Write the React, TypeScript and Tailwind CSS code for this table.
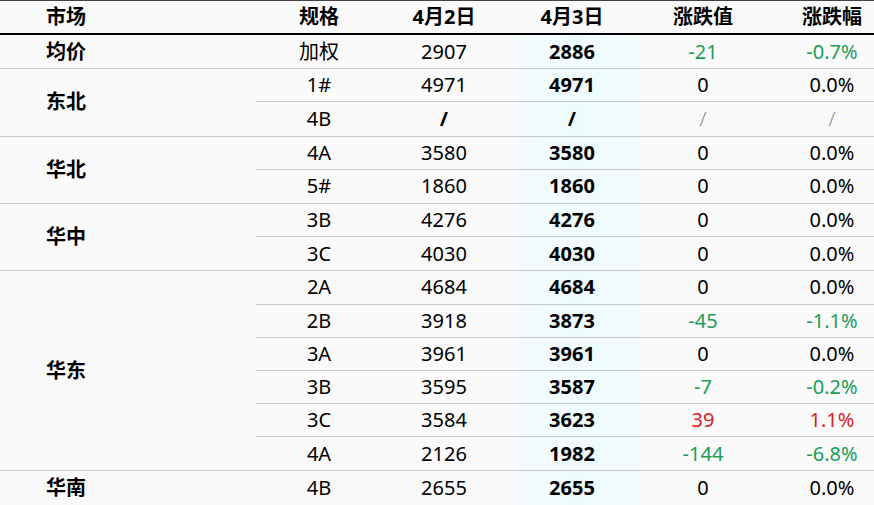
import React from 'react';

type Row = {
  spec: string;
  prev: string;
  cur: string;
  diff: string;
  pct: string;
  tone?: 'up' | 'down' | 'flat' | 'none';
};

type Group = { market: string; rows: Row[] };

const groups: Group[] = [
  { market: '均价', rows: [{ spec: '加权', prev: '2907', cur: '2886', diff: '-21', pct: '-0.7%', tone: 'down' }] },
  {
    market: '东北',
    rows: [
      { spec: '1#', prev: '4971', cur: '4971', diff: '0', pct: '0.0%' },
      { spec: '4B', prev: '/', cur: '/', diff: '/', pct: '/', tone: 'none' },
    ],
  },
  {
    market: '华北',
    rows: [
      { spec: '4A', prev: '3580', cur: '3580', diff: '0', pct: '0.0%' },
      { spec: '5#', prev: '1860', cur: '1860', diff: '0', pct: '0.0%' },
    ],
  },
  {
    market: '华中',
    rows: [
      { spec: '3B', prev: '4276', cur: '4276', diff: '0', pct: '0.0%' },
      { spec: '3C', prev: '4030', cur: '4030', diff: '0', pct: '0.0%' },
    ],
  },
  {
    market: '华东',
    rows: [
      { spec: '2A', prev: '4684', cur: '4684', diff: '0', pct: '0.0%' },
      { spec: '2B', prev: '3918', cur: '3873', diff: '-45', pct: '-1.1%', tone: 'down' },
      { spec: '3A', prev: '3961', cur: '3961', diff: '0', pct: '0.0%' },
      { spec: '3B', prev: '3595', cur: '3587', diff: '-7', pct: '-0.2%', tone: 'down' },
      { spec: '3C', prev: '3584', cur: '3623', diff: '39', pct: '1.1%', tone: 'up' },
      { spec: '4A', prev: '2126', cur: '1982', diff: '-144', pct: '-6.8%', tone: 'down' },
    ],
  },
  { market: '华南', rows: [{ spec: '4B', prev: '2655', cur: '2655', diff: '0', pct: '0.0%' }] },
];

const toneClass = (tone?: Row['tone']) => {
  if (tone === 'down') return 'text-[#1b9d57]';
  if (tone === 'up') return 'text-[#e0201c]';
  if (tone === 'none') return 'text-[#8a8a8a] font-light';
  return 'text-black';
};

const cols = 'grid grid-cols-[126px_124px_132px_130px_128px]';

export default function App() {
  return (
    <div
      className="w-[874px] h-[505px] overflow-hidden bg-[#fafafa] text-black text-[20px]"
      style={{ fontFamily: '"Noto Sans", "Noto Sans CJK SC", sans-serif' }}
    >
      <div className="w-[896px] border-t border-[#444]">
        {/* header */}
        <div className="flex h-[34px] border-b-2 border-black font-bold items-center">
          <div className="w-[256px] pl-[46px]">市场</div>
          <div className={`${cols} text-center`}>
            <div>规格</div>
            <div>4月2日</div>
            <div>4月3日</div>
            <div>涨跌值</div>
            <div>涨跌幅</div>
          </div>
        </div>

        {groups.map((g, gi) => (
          <div key={gi} className="flex border-b border-[#c6c6c6] last:border-b-0">
            <div className="w-[256px] pl-[46px] flex items-center font-bold">{g.market}</div>
            <div className="flex-1">
              {g.rows.map((r, ri) => (
                <div
                  key={ri}
                  className={`${cols} h-[33.2px] text-center items-stretch ${ri < g.rows.length - 1 ? 'border-b border-[#c6c6c6]' : ''}`}
                >
                  <div className="flex items-center justify-center">{r.spec}</div>
                  <div className={`flex items-center justify-center ${r.tone === 'none' ? 'font-bold' : ''}`}>{r.prev}</div>
                  <div className="flex items-center justify-center font-bold bg-gradient-to-r from-[#f7fbfc] via-[#eefbfd] to-[#f2fbfc]">
                    {r.cur}
                  </div>
                  <div className={`flex items-center justify-center ${toneClass(r.tone)}`}>{r.diff}</div>
                  <div className={`flex items-center justify-center ${toneClass(r.tone)}`}>{r.pct}</div>
                </div>
              ))}
            </div>
          </div>
        ))}
      </div>
    </div>
  );
}
